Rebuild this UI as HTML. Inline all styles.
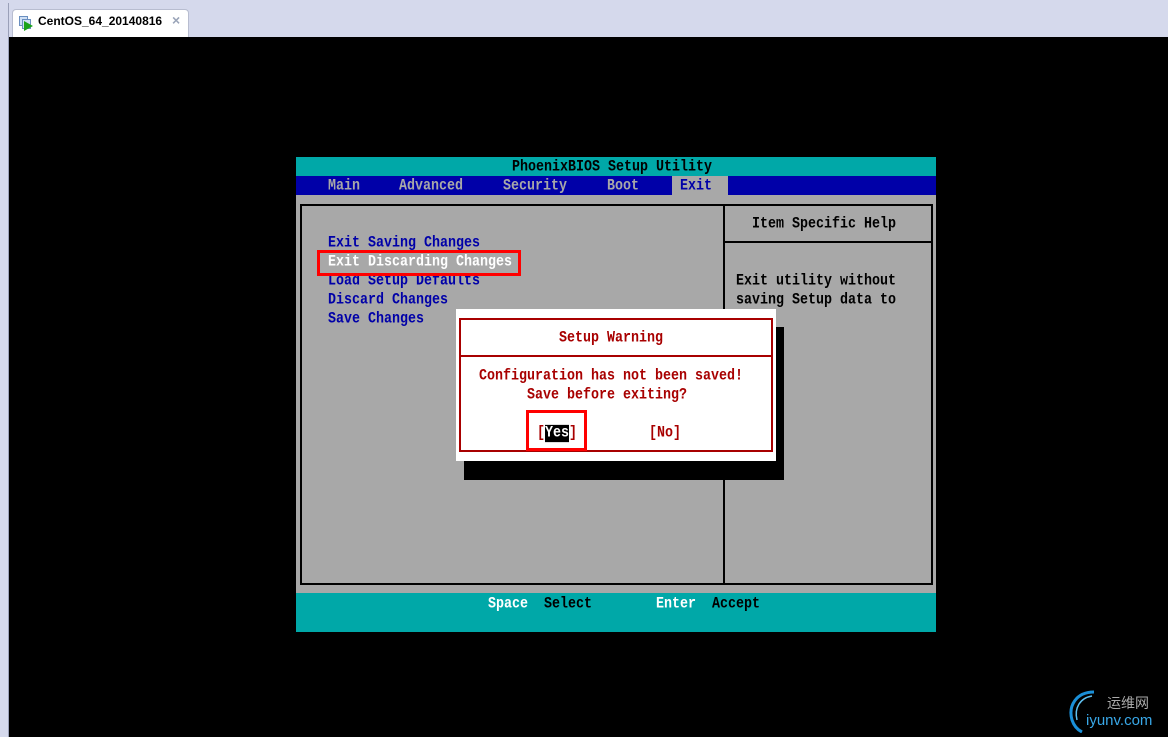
<!DOCTYPE html>
<html><head><meta charset="utf-8"><style>
*{margin:0;padding:0;box-sizing:border-box}
body{width:1168px;height:737px;overflow:hidden;background:#000;position:relative;font-family:"Liberation Mono",monospace}
.a{position:absolute}
.t{position:absolute;font-family:"Liberation Mono",monospace;font-size:13.33px;line-height:19px;white-space:pre;font-weight:bold;transform:translateY(1px) scaleY(1.15);transform-origin:0 50%}
</style></head><body>
<div class="a" style="left:0;top:0;width:1168px;height:37px;background:#d5d9ec"></div>
<div class="a" style="left:0;top:37px;width:9px;height:700px;background:#d5d9ec"></div>
<div class="a" style="left:8px;top:3px;width:1px;height:734px;background:#9aa0b8"></div>
<div class="a" style="left:12px;top:9px;width:177px;height:28px;background:#fff;border-radius:4px 4px 0 0;border:1px solid #b8bdd0;border-bottom:none"></div>
<div class="a" style="left:19px;top:16px;width:9px;height:10px;border:1px solid #6a8fc0;background:#cfe0f5"></div>
<div class="a" style="left:22px;top:19px;width:9px;height:10px;border:1px solid #6a8fc0;background:#cfe0f5"></div>
<svg class="a" style="left:24px;top:21px" width="9" height="10"><polygon points="0,0 9,5 0,10" fill="#1aa31a"/></svg>
<div class="a" style="left:38px;top:14px;font:bold 12px 'Liberation Sans',sans-serif;color:#000">CentOS_64_20140816</div>
<div class="a" style="left:172px;top:12px;font:bold 14px 'Liberation Sans',sans-serif;color:#9aa4b8">×</div>

<div class="a" style="left:296px;top:157px;width:640px;height:19px;background:#00a8a8"></div>
<div class="a" style="left:296px;top:176px;width:640px;height:19px;background:#0000a8"></div>
<div class="a" style="left:672px;top:176px;width:56px;height:19px;background:#a8a8a8"></div>
<div class="a" style="left:296px;top:195px;width:640px;height:398px;background:#a8a8a8"></div>
<div class="a" style="left:300px;top:204px;width:633px;height:381px;border:2px solid #000"></div>
<div class="a" style="left:723px;top:204px;width:2px;height:381px;background:#000"></div>
<div class="a" style="left:724px;top:241px;width:208px;height:2px;background:#000"></div>
<div class="a" style="left:296px;top:593px;width:640px;height:39px;background:#00a8a8"></div>

<div class="t" style="left:512px;top:157px;color:#000">PhoenixBIOS Setup Utility</div>
<div class="t" style="left:328px;top:176px;color:#a8a8a8">Main</div>
<div class="t" style="left:399px;top:176px;color:#a8a8a8">Advanced</div>
<div class="t" style="left:503px;top:176px;color:#a8a8a8">Security</div>
<div class="t" style="left:607px;top:176px;color:#a8a8a8">Boot</div>
<div class="t" style="left:680px;top:176px;color:#0000a8">Exit</div>

<div class="t" style="left:328px;top:233px;color:#0000a8">Exit Saving Changes</div>
<div class="t" style="left:328px;top:252px;color:#fff">Exit Discarding Changes</div>
<div class="t" style="left:328px;top:271px;color:#0000a8">Load Setup Defaults</div>
<div class="t" style="left:328px;top:290px;color:#0000a8">Discard Changes</div>
<div class="t" style="left:328px;top:309px;color:#0000a8">Save Changes</div>
<div class="a" style="left:317px;top:250px;width:204px;height:26px;border:3px solid #f00"></div>

<div class="t" style="left:752px;top:214px;color:#000">Item Specific Help</div>
<div class="t" style="left:736px;top:271px;color:#000">Exit utility without</div>
<div class="t" style="left:736px;top:290px;color:#000">saving Setup data to</div>

<div class="t" style="left:488px;top:594px;color:#fff">Space</div>
<div class="t" style="left:544px;top:594px;color:#000">Select</div>
<div class="t" style="left:656px;top:594px;color:#fff">Enter</div>
<div class="t" style="left:712px;top:594px;color:#000">Accept</div>

<div class="a" style="left:464px;top:327px;width:320px;height:153px;background:#000"></div>
<div class="a" style="left:456px;top:309px;width:320px;height:152px;background:#fff"></div>
<div class="a" style="left:459px;top:318px;width:314px;height:134px;border:2px solid #a80000"></div>
<div class="a" style="left:460px;top:355px;width:312px;height:2px;background:#a80000"></div>
<div class="t" style="left:559px;top:328px;color:#a80000">Setup Warning</div>
<div class="t" style="left:479px;top:366px;color:#a80000">Configuration has not been saved!</div>
<div class="t" style="left:527px;top:385px;color:#a80000">Save before exiting?</div>
<div class="t" style="left:537px;top:423px;color:#a80000">[<span style="background:#000;color:#fff">Yes</span>]</div>
<div class="t" style="left:649px;top:423px;color:#a80000">[No]</div>
<div class="a" style="left:526px;top:410px;width:61px;height:41px;border:3px solid #f00"></div>

<svg class="a" style="left:1064px;top:688px" width="40" height="45"><path d="M30 4 C12 4 4 18 8 32 C10 38 14 42 18 44" stroke="#1a8fd8" stroke-width="3" fill="none"/><path d="M28 8 C16 10 10 20 13 32" stroke="#5fc0f0" stroke-width="1.5" fill="none"/></svg>
<div class="a" style="left:1107px;top:693px;font:14px 'Noto Sans CJK SC',sans-serif;color:#aaa">运维网</div>
<div class="a" style="left:1086px;top:712px;font:15px 'Liberation Sans',sans-serif;color:#39a8e8">iyunv.com</div>
</body></html>
